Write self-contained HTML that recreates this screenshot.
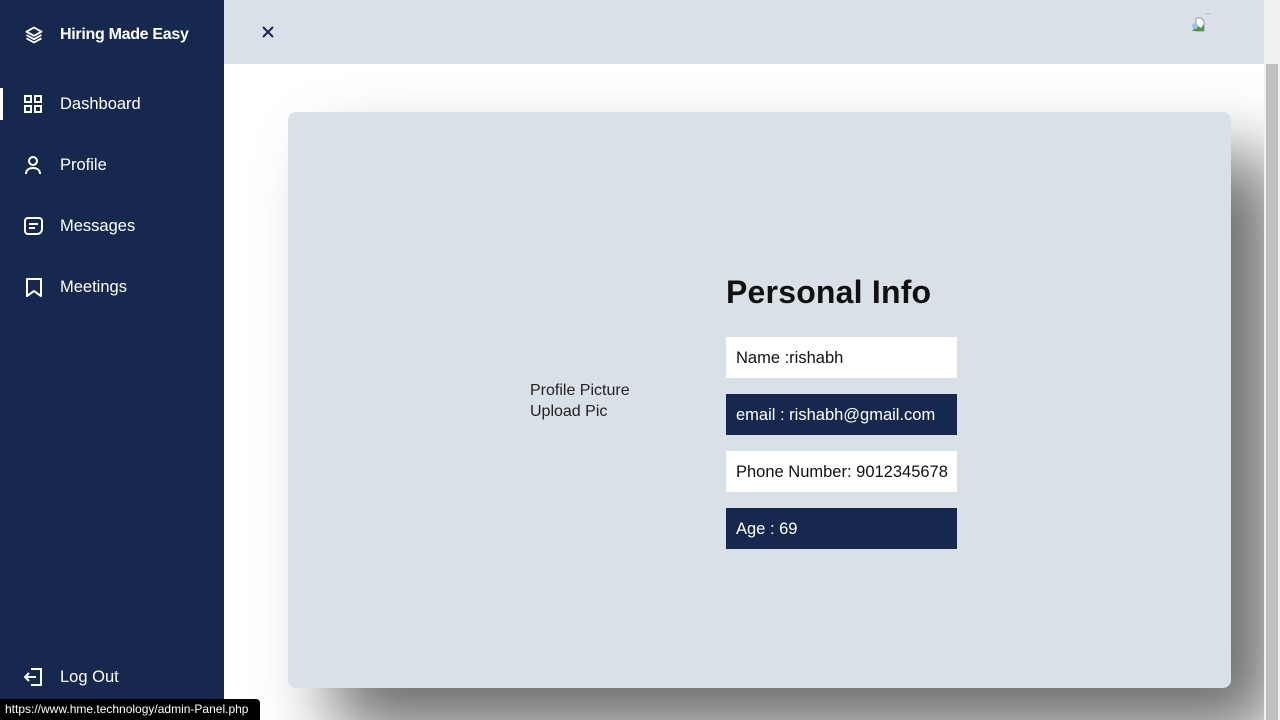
<!DOCTYPE html>
<html><head><meta charset="utf-8"><style>
*{margin:0;padding:0;box-sizing:border-box}
body{width:1280px;height:720px;overflow:hidden;background:#fff;font-family:"Liberation Sans",sans-serif;position:relative}
.side{position:absolute;left:0;top:0;width:224px;height:720px;background:#17284f;color:#fff;z-index:2}
.brand{position:absolute;left:60px;top:26px;font-size:16px;font-weight:bold;letter-spacing:-0.3px}
.item{position:absolute;left:60px;font-size:16.5px}
.ic{position:absolute;left:24px}
.active{position:absolute;left:0;top:88px;width:3px;height:32px;background:#fff}
.top{position:absolute;left:224px;top:0;width:1040px;height:64px;background:#dae0e7;z-index:2}
.sb{position:absolute;left:1264px;top:0;width:16px;height:720px;background:#f1f1f1;z-index:2}
.thumb{position:absolute;left:1266px;top:64px;width:12px;height:656px;background:#c1c1c1;z-index:2}
.card{position:absolute;left:288px;top:112px;width:943px;height:576px;background:#dae0e7;border-radius:8px;box-shadow:45px 45px 70px #6e6e6e}
.f{position:absolute;left:726px;width:231px;height:41px;padding-left:10px;line-height:42px;font-size:16.5px}
.w{background:#fff;color:#111}.d{background:#17284f;color:#fff}
.status{position:absolute;left:0;top:699px;width:260px;height:21px;background:#000;color:#fff;font-size:12px;line-height:21px;padding-left:5px;border-top-right-radius:4px;z-index:3}
</style></head><body>
<div class="side">
<svg class="ic" style="top:25px" width="20" height="20" viewBox="0 0 24 24" fill="none" stroke="#fff" stroke-width="2.2" stroke-linejoin="round"><path d="M12 3 3 8l9 5 9-5z"/><path d="M3 12l9 5 9-5"/><path d="M3 16l9 5 9-5"/></svg>
<div class="brand">Hiring Made Easy</div>
<div class="active"></div>
<svg class="ic" style="top:95px" width="18" height="18" viewBox="0 0 18 18" fill="none" stroke="#fff" stroke-width="2"><rect x="1" y="1" width="6" height="6"/><rect x="11" y="1" width="6" height="6"/><rect x="1" y="11" width="6" height="6"/><rect x="11" y="11" width="6" height="6"/></svg>
<div class="item" style="top:95px">Dashboard</div>
<svg class="ic" style="top:156px" width="18" height="18" viewBox="0 0 18 18" fill="none" stroke="#fff" stroke-width="2"><circle cx="9" cy="5" r="4"/><path d="M2 18c0-4 3-6 7-6s7 2 7 6"/></svg>
<div class="item" style="top:156px">Profile</div>
<svg class="ic" style="top:217px" width="19" height="19" viewBox="0 0 19 19" fill="none" stroke="#fff" stroke-width="2"><path d="M4 1h11a3 3 0 0 1 3 3v8a5 5 0 0 1-5 5H4a3 3 0 0 1-3-3V4a3 3 0 0 1 3-3z"/><path d="M5 7h9M5 11h6"/></svg>
<div class="item" style="top:217px">Messages</div>
<svg class="ic" style="top:278px;left:26px" width="16" height="19" viewBox="0 0 16 19" fill="none" stroke="#fff" stroke-width="2" stroke-linejoin="round"><path d="M1 1h14v17l-7-5-7 5z"/></svg>
<div class="item" style="top:278px">Meetings</div>
<svg class="ic" style="top:668px" width="19" height="18" viewBox="0 0 19 18" fill="none" stroke="#fff" stroke-width="2"><path d="M7 1h10v16H7"/><path d="M12 9H2M5 5 1 9l4 4"/></svg>
<div class="item" style="top:668px">Log Out</div>
</div>
<div class="top"><svg style="position:absolute;left:38px;top:26px" width="12" height="12" viewBox="0 0 12 12" stroke="#17284f" stroke-width="2"><path d="M1 1l10 10M11 1 1 11"/></svg>
<svg style="position:absolute;left:966px;top:12px" width="24" height="20" viewBox="0 0 24 20"><path d="M6 6h5l3 3v10H6z" fill="#fff" stroke="#999"/><path d="M2 19l5-6 4 3 3-4v7z" fill="#4a9a3a"/><circle cx="5" cy="14" r="3" fill="#9cc3e8"/><path d="M15 2h6" stroke="#bbb"/></svg></div>
<div class="sb"></div><div class="thumb"></div>
<div class="card"></div>
<div style="position:absolute;left:530px;top:380px;font-size:16px;color:#222;line-height:21px">Profile Picture<br>Upload Pic</div>
<div style="position:absolute;left:726px;top:274px;font-size:32px;font-weight:bold;color:#111;letter-spacing:0.2px">Personal Info</div>
<div class="f w" style="top:337px">Name :rishabh</div>
<div class="f d" style="top:394px">email : rishabh@gmail.com</div>
<div class="f w" style="top:451px">Phone Number: 9012345678</div>
<div class="f d" style="top:508px">Age : 69</div>
<div class="status">https://www.hme.technology/admin-Panel.php</div>
</body></html>
